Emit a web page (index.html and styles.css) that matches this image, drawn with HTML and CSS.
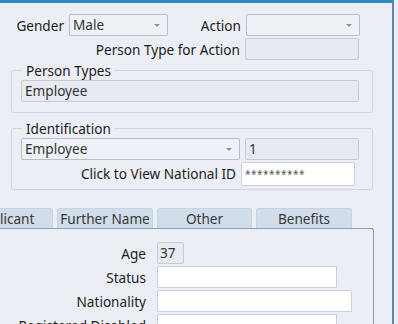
FILE: index.html
```
<!DOCTYPE html>
<html lang="en">
<head>
    <meta charset="UTF-8">
    <title>Person</title>
    <link rel="stylesheet" href="styles.css">
</head>
<body>
    <div class="window">
        <div class="row first">
            <label class="lbl genderLbl">Gender</label>
            <div class="select genderSel">Male<span class="arrow"></span></div>
            <label class="lbl actionLbl">Action</label>
            <div class="select actionSel"><span class="arrow"></span></div>
        </div>
        <div class="row">
            <label class="lbl wideLbl">Person Type for Action</label>
            <div class="field disabled short"></div>
        </div>

        <fieldset class="group types">
            <legend>Person Types</legend>
            <div class="field disabled long">Employee</div>
        </fieldset>

        <fieldset class="group ident">
            <legend>Identification</legend>
            <div class="row tight">
                <div class="select idSel">Employee<span class="arrow"></span></div>
                <div class="field disabled short">1</div>
            </div>
            <div class="row tight">
                <label class="lbl idLbl">Click to View National ID</label>
                <div class="field white short tall stars">**********</div>
            </div>
        </fieldset>

        <div class="tabs">
            <div class="tab">Applicant</div>
            <div class="tab">Further Name</div>
            <div class="tab">Other</div>
            <div class="tab">Benefits</div>
        </div>
        <div class="panel">
            <div class="prow">
                <label class="plbl">Age</label>
                <div class="field disabled age">37</div>
            </div>
            <div class="prow">
                <label class="plbl">Status</label>
                <div class="field white w179"></div>
            </div>
            <div class="prow">
                <label class="plbl">Nationality</label>
                <div class="field white w194"></div>
            </div>
            <div class="prow">
                <label class="plbl">Registered Disabled</label>
                <div class="field white w179"></div>
            </div>
        </div>
    </div>
</body>
</html>
```

FILE: styles.css
```
html, body {
    margin: 0;
    padding: 0;
    background-color: #ebeff5;
    overflow: hidden;
}

body {
    font-family: 'Noto Sans', 'DejaVu Sans', sans-serif;
    font-size: 13.6px;
    color: #1c1c1c;
    width: 398px;
    height: 324px;
}

.window {
    width: 392px;
    height: 321px;
    border-top: 3px solid #2f86c9;
    border-right: 2px solid #5b86b6;
    position: relative;
    overflow: hidden;
}

.row {
    display: flex;
    align-items: center;
    height: 22px;
    margin-bottom: 1px;
}

.row.first {
    margin-top: 11px;
    margin-bottom: 2px;
}

.lbl {
    text-align: right;
    white-space: nowrap;
}

.genderLbl {
    width: 64px;
    margin-right: 5px;
}

.actionLbl {
    width: 73px;
    margin-right: 5px;
}

.wideLbl {
    width: 240px;
    margin-right: 5px;
}

.select, .field {
    box-sizing: border-box;
    height: 22px;
    line-height: 20px;
    padding: 0 3px;
    position: relative;
    white-space: nowrap;
}

.select {
    background: #eef1f5;
    border: 1px solid #b8bfc9;
    border-radius: 2px;
    color: #333;
}

.arrow {
    position: absolute;
    right: 7px;
    top: 9px;
    border-left: 3px solid transparent;
    border-right: 3px solid transparent;
    border-top: 3px solid #8c929c;
}

.genderSel { width: 99px; }
.actionSel { width: 114px; }

.field.disabled {
    background: #e7ebf1;
    border: 1px solid #c4ccd6;
    border-radius: 2px;
    color: #333;
}

.field.white {
    background: #ffffff;
    border: 1px solid #c6d1dd;
    border-radius: 1px;
}

.short { width: 114px; }
.long { width: 338px; }
.tall { height: 24px; line-height: 22px; }

.stars {
    font-size: 10px;
    color: #555;
    letter-spacing: 0.5px;
}

.group {
    border: 1px solid #ccd6e1;
    border-radius: 3px;
    margin: 0 0 0 11px;
    width: 362px;
    box-sizing: border-box;
    padding: 0 0 0 9px;
}

.group legend {
    padding: 0 4px;
    margin-left: 1px;
    color: #1c1c1c;
    line-height: 15px;
}

.types {
    margin-top: 3px;
    height: 50px;
}

.types .field {
    margin-top: 2px;
}

.ident {
    margin-top: 8px;
    height: 69px;
}

.row.tight {
    margin-bottom: 0;
    margin-top: 2px;
}

.idSel {
    width: 219px;
    margin-right: 5px;
}

.idLbl {
    width: 215px;
    margin-right: 5px;
    margin-top: 1px;
}

.ident .stars {
    margin-top: 1px;
}

.tabs {
    display: flex;
    gap: 4px;
    margin: 18px 0 0 -44px;
    height: 20px;
    width: 417px;
    border-bottom: 1px solid #8e9fb2;
}

.tab {
    width: 96px;
    flex: none;
    background: #d1ddea;
    border: 1px solid #c6d3e1;
    border-bottom: none;
    border-radius: 3px 3px 0 0;
    text-align: center;
    line-height: 20px;
    color: #383838;
    box-sizing: border-box;
}

.tab:first-child { width: 97px; }
.tab:nth-child(3) { width: 95px; }

.panel {
    width: 374px;
    height: 120px;
    margin-top: -1px;
    border-right: 1px solid #8e9fb2;
    border-top: 1px solid #8e9fb2;
    border-top-right-radius: 3px;
    box-sizing: border-box;
    padding-top: 13px;
}

.prow {
    display: flex;
    align-items: center;
    height: 22px;
    margin-bottom: 2px;
}

.plbl {
    width: 146px;
    margin-right: 11px;
    text-align: right;
    white-space: nowrap;
}

.age { width: 27px; padding: 0 2px; }
.w179 { width: 180px; }
.w194 { width: 195px; }
```
